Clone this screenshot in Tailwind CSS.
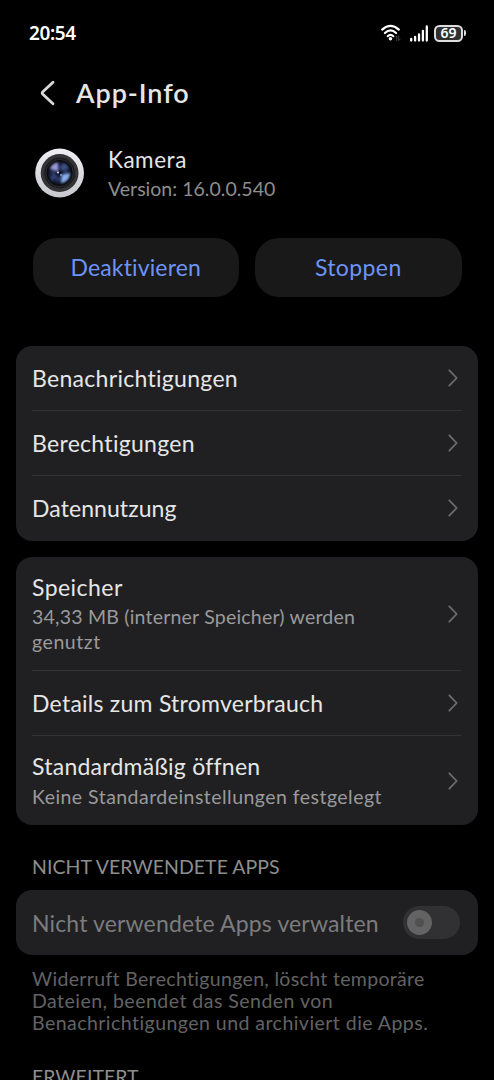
<!DOCTYPE html>
<html lang="de">
<head>
<meta charset="utf-8">
<title>App-Info</title>
<script src="https://cdn.jsdelivr.net/npm/@tailwindcss/browser@4"></script>
</head>
<body class="bg-black">
<div class="w-[494px] h-[1080px] overflow-hidden bg-black text-[#e6e6e6] font-['Lato',sans-serif] whitespace-nowrap flex flex-col">
  <header class="h-[66px] shrink-0 flex items-center justify-between pl-[29px] pr-[28px]">
    <span class="text-[19px] font-semibold text-white font-['Noto_Sans',sans-serif] leading-none tracking-[-0.400px]">20:54</span>
    <div class="flex items-center">
      <svg class="w-[21px] h-[18px]" viewBox="0 0 21 18" fill="none" stroke="#fff" stroke-linecap="round">
        <path d="M1.200 5.600Q9.500-2 17.800 5.600" stroke-width="2.200"/>
        <path d="M3.900 9Q9.500 3.800 15.100 9" stroke-width="2.200"/>
        <path d="M6.600 12.200Q9.500 9.600 12.400 12.200" stroke-width="2"/>
        <circle cx="9.500" cy="14.700" r="1.800" fill="#fff" stroke="none"/>
        <path d="M15.700 16.500v-4.600l-1.300 1.400M17.700 12v4.600l1.300-1.400" stroke="#444" stroke-width="1"/>
      </svg>
      <svg class="ml-[8px] w-[18px] h-[17px]" viewBox="0 0 18 17" stroke="#fff" stroke-width="2.300" stroke-linecap="round">
        <path d="M1.200 15.500v-1.500M5.100 15.500v-3.500M9 15.500v-6M12.900 15.500v-9.500M16.800 15.500v-14"/>
      </svg>
      <div class="ml-[6px] w-[29px] h-[17px] rounded-[5.500px] border-2 border-[#ddd] bg-[#303030] flex items-center justify-center text-[14px] leading-none font-semibold text-white font-['Noto_Sans',sans-serif]">69</div>
      <div class="ml-px w-[2px] h-[6px] rounded-r-sm bg-[#ddd]"></div>
    </div>
  </header>
  <div class="h-[54px] shrink-0 flex items-center pl-[40px]">
    <svg class="w-[15px] h-[26px]" viewBox="0 0 15 26" fill="none" stroke="#d8d8d8" stroke-width="2.800" stroke-linecap="round" stroke-linejoin="round"><path d="M13 2.200L2.600 12a1.400 1.400 0 0 0 0 2L13 23.800"/></svg>
    <h1 class="ml-[21px] pb-[2px] text-[27px] font-semibold leading-none tracking-[0.950px]">App-Info</h1>
  </div>
  <div class="h-[118px] shrink-0 flex pl-[35px] pt-[28px]">
    <svg class="w-[50px] h-[50px]" viewBox="0 0 50 50">
      <defs>
        <linearGradient id="ring" x1="0" y1="0" x2="0" y2="1"><stop offset="0" stop-color="#f0f0f4"/><stop offset="1" stop-color="#c7c8ce"/></linearGradient>
        <radialGradient id="lens" cx=".5" cy=".5" r=".5"><stop offset="0" stop-color="#10142c"/><stop offset=".5" stop-color="#2c3a68"/><stop offset=".8" stop-color="#181f3a"/><stop offset="1" stop-color="#0b0c12"/></radialGradient>
        <filter id="soft" x="-20%" y="-20%" width="140%" height="140%"><feGaussianBlur stdDeviation="0.900"/></filter>
      </defs>
      <circle cx="24.600" cy="25" r="24.400" fill="url(#ring)"/>
      <circle cx="24.600" cy="25" r="18.900" fill="#343436"/>
      <circle cx="24.600" cy="25" r="15.200" fill="#19191c"/>
      <circle cx="24.600" cy="25" r="13.600" fill="#0a0a0d" stroke="#3a3b40" stroke-width=".7"/>
      <circle cx="24.600" cy="25" r="12" fill="url(#lens)"/>
      <g filter="url(#soft)">
        <path d="M23 23L15 21a10 10 0 0 1 8-6.500Z" fill="#9a9ad4"/>
        <path d="M27 27L35 25a10 10 0 0 1-9 10Z" fill="#8ab0ec"/>
        <path d="M26 22l2-7a10 10 0 0 1 6 5Z" fill="#4964a0" opacity=".7"/>
        <path d="M21 28l-4 6-2-6Z" fill="#344b88" opacity=".8"/>
        <circle cx="24.500" cy="25" r="2.800" fill="#0c1027"/>
      </g>
      <circle cx="23" cy="24.500" r="1.100" fill="#c7cbf0"/>
      <circle cx="26" cy="27" r=".9" fill="#8aa6e8"/>
    </svg>
    <div class="ml-[23px] flex flex-col">
      <span class="h-[24px] flex items-center text-[22.500px] tracking-[0.550px]">Kamera</span>
      <span class="mt-[5px] h-[24px] flex items-center text-[19.500px] tracking-[0.020px] text-[#8e8e8e]">Version: 16.0.0.540</span>
    </div>
  </div>
  <div class="h-[59px] shrink-0 flex gap-[16px] px-[32.500px] text-[23px] text-[#6c94f5]">
    <button class="flex-1 rounded-[24px] bg-[#191919] tracking-[0.130px]">Deaktivieren</button>
    <button class="flex-1 rounded-[24px] bg-[#191919] tracking-[0.400px]">Stoppen</button>
  </div>

  <section class="mt-[49px] mx-[16px] px-[16px] h-[194.500px] shrink-0 rounded-[16px] bg-[#202022] flex flex-col text-[23px] tracking-[0.300px]">
    <div class="h-[65px] border-b border-[#333335] flex items-center justify-between pr-[4px]"><span>Benachrichtigungen</span>
      <svg class="w-[10px] h-[18px]" viewBox="0 0 10 18" fill="none" stroke="#6c6c6e" stroke-width="1.800" stroke-linecap="round" stroke-linejoin="round"><path d="M1.300 1.300L8.700 9L1.300 16.700"/></svg></div>
    <div class="h-[65px] border-b border-[#333335] flex items-center justify-between pr-[4px]"><span>Berechtigungen</span>
      <svg class="w-[10px] h-[18px]" viewBox="0 0 10 18" fill="none" stroke="#6c6c6e" stroke-width="1.800" stroke-linecap="round" stroke-linejoin="round"><path d="M1.300 1.300L8.700 9L1.300 16.700"/></svg></div>
    <div class="h-[64px] flex items-center justify-between pr-[4px]"><span class="tracking-[0.080px]">Datennutzung</span>
      <svg class="w-[10px] h-[18px]" viewBox="0 0 10 18" fill="none" stroke="#6c6c6e" stroke-width="1.800" stroke-linecap="round" stroke-linejoin="round"><path d="M1.300 1.300L8.700 9L1.300 16.700"/></svg></div>
  </section>

  <section class="mt-[16.500px] mx-[16px] px-[16px] h-[268px] shrink-0 rounded-[16px] bg-[#202022] flex flex-col text-[23px] tracking-[0.250px]">
    <div class="h-[114px] border-b border-[#333335] flex items-center justify-between pr-[4px]">
      <div class="flex flex-col"><span class="h-[32px] leading-[28px] tracking-[0.450px]">Speicher</span>
        <span class="text-[19.500px] leading-[24.500px] text-[#9a9a9c]"><span class="tracking-[0.210px]">34,33 MB (interner Speicher) werden</span><br><span class="tracking-[0.550px]">genutzt</span></span></div>
      <svg class="w-[10px] h-[18px]" viewBox="0 0 10 18" fill="none" stroke="#6c6c6e" stroke-width="1.800" stroke-linecap="round" stroke-linejoin="round"><path d="M1.300 1.300L8.700 9L1.300 16.700"/></svg></div>
    <div class="h-[65px] border-b border-[#333335] flex items-center justify-between pr-[4px]"><span>Details zum Stromverbrauch</span>
      <svg class="w-[10px] h-[18px]" viewBox="0 0 10 18" fill="none" stroke="#6c6c6e" stroke-width="1.800" stroke-linecap="round" stroke-linejoin="round"><path d="M1.300 1.300L8.700 9L1.300 16.700"/></svg></div>
    <div class="h-[89px] flex items-center justify-between pr-[4px]">
      <div class="flex flex-col"><span class="h-[32px] leading-[29px]">Standardmäßig öffnen</span>
        <span class="text-[19.500px] leading-[26px] tracking-[0.460px] text-[#9a9a9c]">Keine Standardeinstellungen festgelegt</span></div>
      <svg class="w-[10px] h-[18px]" viewBox="0 0 10 18" fill="none" stroke="#6c6c6e" stroke-width="1.800" stroke-linecap="round" stroke-linejoin="round"><path d="M1.300 1.300L8.700 9L1.300 16.700"/></svg></div>
  </section>

  <h2 class="h-[65px] shrink-0 pt-[30px] pl-[32px] text-[19.500px] leading-[24px] tracking-[0.050px] text-[#8e8e8e]">NICHT VERWENDETE APPS</h2>
  <section class="mx-[16px] pl-[16px] pr-[18px] h-[65px] shrink-0 rounded-[16px] bg-[#202022] flex items-center justify-between text-[23px] tracking-[0.150px] text-[#7c7c7e]">
    <span class="pt-px">Nicht verwendete Apps verwalten</span>
    <div class="w-[57px] h-[33px] rounded-full bg-[#313133] flex items-center pl-[4px]">
      <div class="w-[25px] h-[25px] rounded-full bg-[#636363] flex items-center justify-center"><div class="size-[9px] rounded-full bg-[#505050]"></div></div>
    </div>
  </section>
  <p class="mt-[13px] pl-[32px] text-[19.500px] leading-[22px] text-[#636363]"><span class="tracking-[0.330px]">Widerruft Berechtigungen, löscht temporäre</span><br><span class="tracking-[0.480px]">Dateien, beendet das Senden von</span><br><span class="tracking-[0.460px]">Benachrichtigungen und archiviert die Apps.</span></p>
  <h2 class="mt-[32px] pl-[32px] text-[19.500px] leading-[22px] tracking-[0.050px] text-[#8e8e8e]">ERWEITERT</h2>
</div>
</body>
</html>
